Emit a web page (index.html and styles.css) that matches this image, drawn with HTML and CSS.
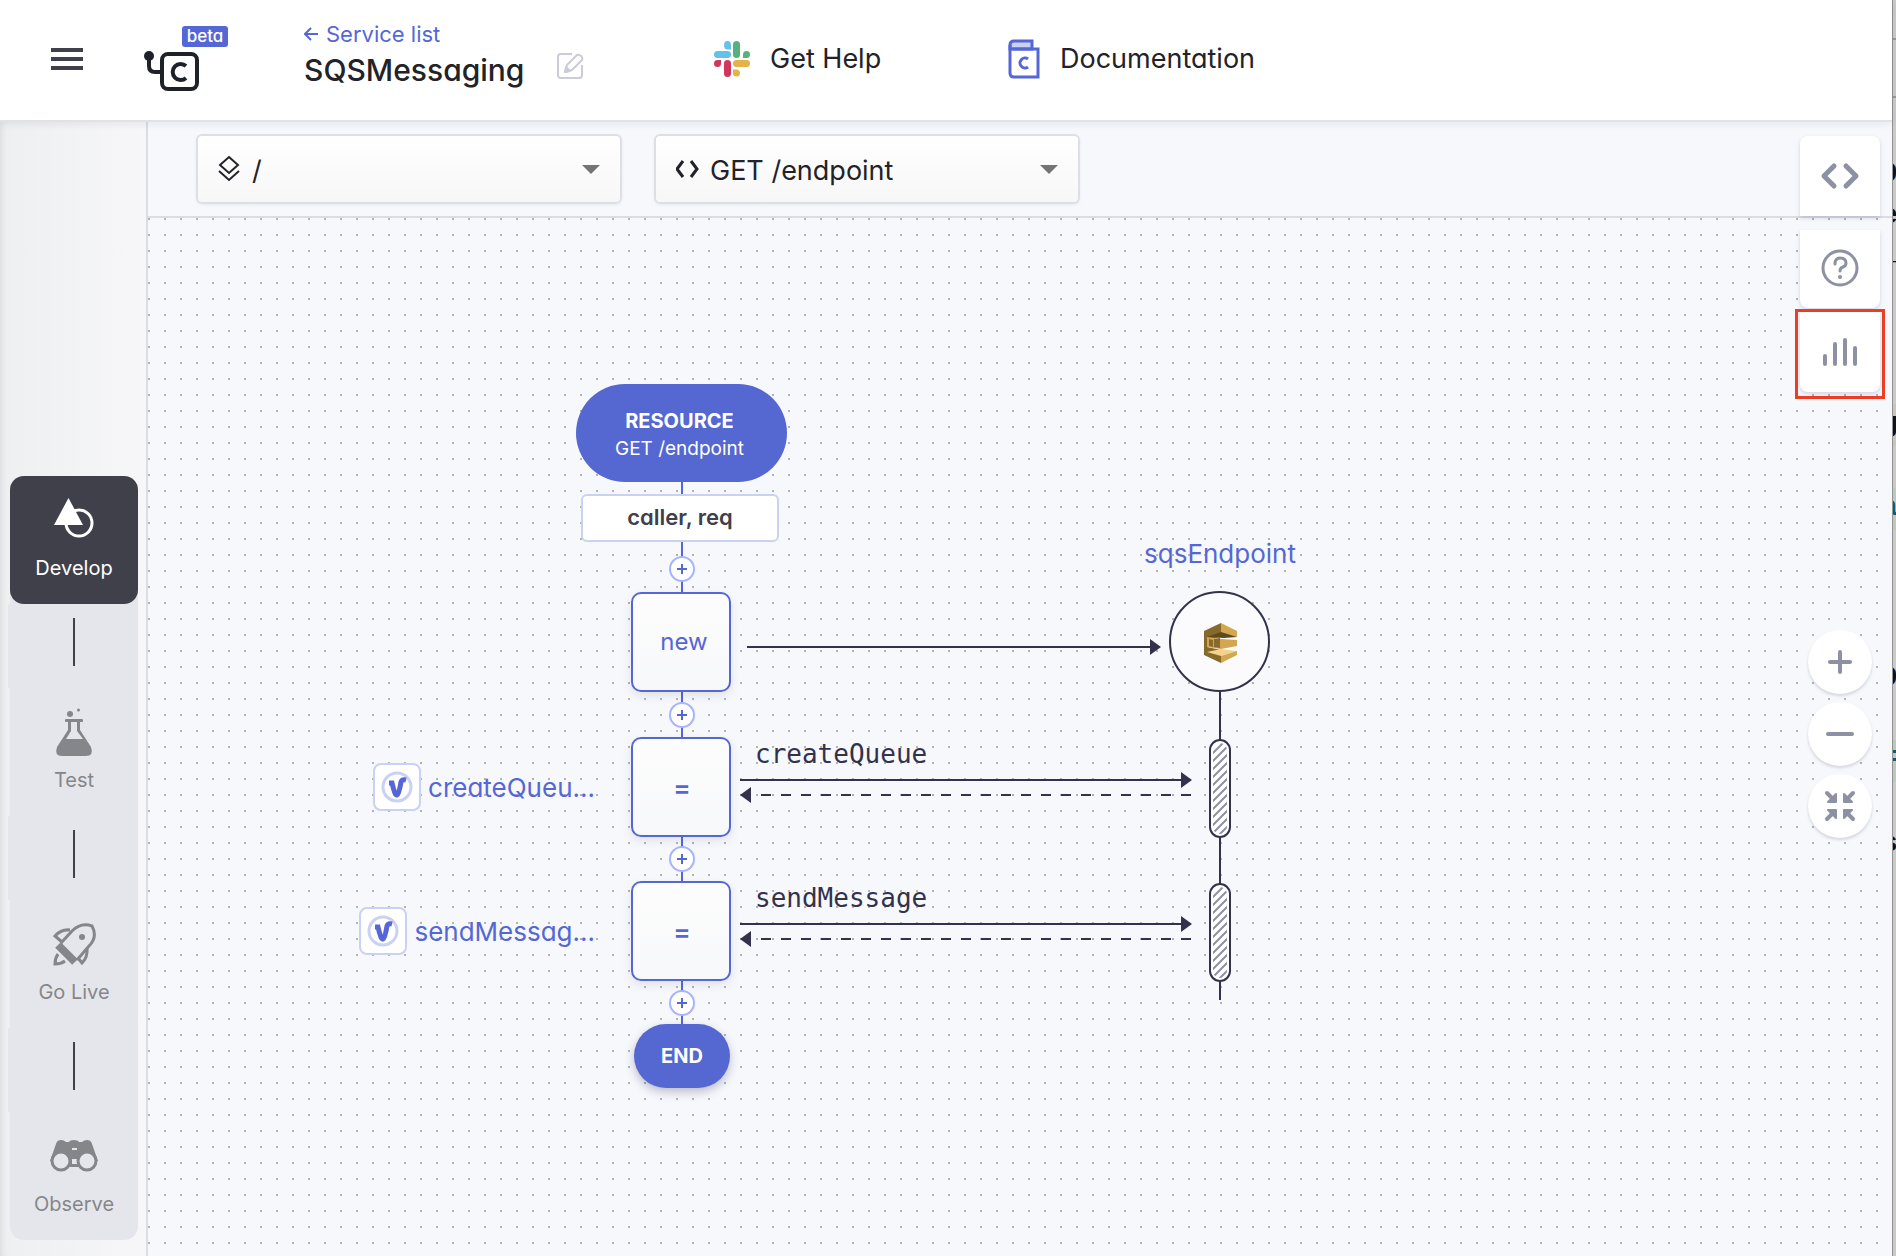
FILE: index.html
```html
<!DOCTYPE html>
<html lang="en">
<head>
<meta charset="utf-8">
<meta name="viewport" content="width=device-width, initial-scale=1">
<title>SQSMessaging</title>
<link rel="stylesheet" href="styles.css">
</head>
<body>
<div class="app">
  <header class="header">
    <button class="menu-button" aria-label="Menu"><span></span><span></span><span></span></button>
    <a class="logo" href="#" aria-label="Home">
      <svg width="90" height="66" viewBox="0 0 90 66" fill="none" stroke="#1f2129" stroke-width="4">
        <circle cx="10" cy="30" r="5" fill="#1f2129" stroke="none"/>
        <path d="M10 30v10q0 6 6 6h7"/>
        <rect x="23" y="28" width="35" height="35" rx="6"/>
        <path d="M47 40a8 8 0 1 0 0 12"/>
      </svg>
      <span class="beta">beta</span>
    </a>
    <div class="service">
      <a class="back" href="#">
        <svg width="14" height="14" viewBox="0 0 14 14" fill="none" stroke="currentColor" stroke-width="2"><path d="M14 7H2M7 1L1 7l6 6"/></svg>
        Service list</a>
      <h1>SQSMessaging</h1>
    </div>
    <button class="edit" aria-label="Rename service">
      <svg width="28" height="28" viewBox="0 0 28 28" fill="none" stroke="#cbccd8" stroke-width="2" stroke-linejoin="round">
        <path d="M16 2H5Q2 2 2 5v18q0 3 3 3h18q3 0 3-3V13"/>
        <path d="M9 20l2-7L21 3q2-1 4 1t1 4L16 18z"/><path d="M9 20l1-5 4 4z" fill="#cbccd8"/>
      </svg>
    </button>
    <a class="help-link" href="#">
      <svg width="36" height="36" viewBox="0 0 36 36">
        <g fill="#63c1ea"><path d="M17 8.500H13.500A3.500 4.250 0 1 1 17 4z"/><rect y="10" width="17" height="7" rx="3.500"/></g>
        <g fill="#56b27d"><rect x="19" width="7" height="17" rx="3.500"/><path d="M29 17v-3.500a3.500 3.500 0 1 1 3.500 3.500z"/></g>
        <g fill="#e3b248"><rect x="19" y="19" width="17" height="7" rx="3.500"/><path d="M19 28.500h3.500a3.500 3.500 0 1 1-3.500 3.500z"/></g>
        <g fill="#d2365c"><path d="M7 19v3.500A3.500 3.500 0 1 1 3.500 19z"/><rect x="10" y="19" width="7" height="17" rx="3.500"/></g>
      </svg>
      Get Help</a>
    <a class="docs-link" href="#">
      <svg width="32" height="40" viewBox="0 0 32 40" fill="none" stroke="#5567d5" stroke-width="3">
        <path d="M6 2h18v8H2V6q0-4 4-4z" fill="#cbd1f0"/>
        <path d="M2 6v28q0 4 4 4h24V10H4"/>
        <path d="M20 20a5 5 0 1 0 0 8"/>
      </svg>
      Documentation</a>
  </header>

  <div class="workspace">
    <aside class="sidebar">
      <nav class="stages">
        <a class="stage active" href="#">
          <svg width="48" height="48" viewBox="0 0 48 48"><path d="M18.500 2L33 29H4z" fill="#fff"/><circle cx="29" cy="27" r="13" fill="none" stroke="#fff" stroke-width="3"/></svg>
          Develop</a>
        <div class="link"></div>
        <a class="stage" href="#">
          <svg width="48" height="48" viewBox="0 0 48 48" fill="#85868a"><circle cx="20" cy="6" r="3"/><circle cx="28.500" cy="2" r="1.500"/><rect x="15" y="11" width="18" height="3" rx="1"/><path d="M18 13v9L7 39q-3 9 5 9h24q8 0 5-9L30 22v-9h-3v10l6 8H16l5-8V13z"/></svg>
          Test</a>
        <div class="link"></div>
        <a class="stage" href="#">
          <svg width="48" height="48" viewBox="0 0 48 48" fill="none" stroke="#85868a" stroke-width="3"><path d="M11 23L22 11Q31 2 42 6 48 17 39 26L27 40"/><path d="M8 25l17 17" stroke-width="8"/><circle cx="32" cy="17" r="3" fill="#85868a" stroke="none"/><path d="M20 10Q11 9 5 16l7 6M37 28q1 9-5 15l-4-5M8 34q-3 4-3 10 6 0 10-3"/></svg>
          Go Live</a>
        <div class="link"></div>
        <a class="stage" href="#">
          <svg width="48" height="48" viewBox="0 0 48 48" fill="#85868a"><path fill-rule="evenodd" d="M6 12q1-4 5-4 3 0 5 2h3q1-2 5-2t5 2h3q2-2 5-2 4 0 5 4l6 17H29v6H19v-6H0zM22 16v2h5v-2zM22 27v5h5v-5z"/><circle cx="11" cy="29" r="9" fill="#e5e6eb" stroke="#85868a" stroke-width="3"/><circle cx="37" cy="29" r="9" fill="#e5e6eb" stroke="#85868a" stroke-width="3"/></svg>
          Observe</a>
      </nav>
    </aside>

    <main class="main">
      <div class="toolbar">
        <div class="picker">
          <svg width="24" height="28" viewBox="0 0 24 28" fill="none" stroke="#222228" stroke-width="2"><path d="M11 2l9 8-9 8-9-8zM1 16l10 9 10-9"/></svg>
          <select aria-label="Path"><option>/</option></select>
          <i class="caret"></i>
        </div>
        <div class="picker">
          <svg width="24" height="28" viewBox="0 0 24 28" fill="none" stroke="#222228" stroke-width="3"><path d="M7 6l-6 8 6 8M15 6l6 8-6 8"/></svg>
          <select aria-label="Resource"><option>GET /endpoint</option></select>
          <i class="caret"></i>
        </div>
      </div>

      <section class="canvas" aria-label="Diagram">
        <svg class="edges" width="1200" height="860" viewBox="0 0 1200 860" fill="none" stroke="#32324d" stroke-width="2">
          <defs>
            <pattern id="hatch" width="8" height="8" patternUnits="userSpaceOnUse"><path d="M-2 2l4-4M0 8l8-8M6 10l4-4" stroke="#8d91a3" stroke-width="2"/></pattern>
          </defs>
          <path d="M534 264v542" stroke="#5567d5"/>
          <path d="M599 429h404M592 562h442M592 706h442"/>
          <path d="M593 577h450M593 721h450" stroke-dasharray="10 10"/>
          <g fill="#32324d" stroke="none">
            <path d="M1002 421v16l11-8zM1033 554v16l11-8zM1033 698v16l11-8zM603 569v16l-11-8zM603 713v16l-11-8z"/>
          </g>
          <path d="M1072 472v310"/>
          <g fill="#fff"><rect x="1062" y="522" width="20" height="97" rx="10"/><rect x="1062" y="666" width="20" height="97" rx="10"/></g>
          <g fill="url(#hatch)" stroke="none"><rect x="1065" y="525" width="14" height="91" rx="7"/><rect x="1065" y="669" width="14" height="91" rx="7"/></g>
        </svg>

        <div class="node resource"><strong>RESOURCE</strong><span>GET /endpoint</span></div>
        <div class="node params">caller, req</div>
        <button class="add add-1" aria-label="Add"></button>
        <div class="node step step-new">new</div>
        <button class="add add-2" aria-label="Add"></button>
        <div class="node step assign step-create">=</div>
        <button class="add add-3" aria-label="Add"></button>
        <div class="node step assign step-send">=</div>
        <button class="add add-4" aria-label="Add"></button>
        <div class="node end">END</div>

        <div class="variable var-create">
          <span class="badge"><svg width="33" height="33" viewBox="0 0 33 33" fill="none"><circle cx="16" cy="16" r="14" stroke="#cbd1f0" stroke-width="3"/><path d="M8 12h3q3 13 5 12t4-13q1-3 5-2" stroke="#5567d5" stroke-width="5"/></svg></span>createQueu...
        </div>
        <div class="variable var-send">
          <span class="badge"><svg width="33" height="33" viewBox="0 0 33 33" fill="none"><circle cx="16" cy="16" r="14" stroke="#cbd1f0" stroke-width="3"/><path d="M8 12h3q3 13 5 12t4-13q1-3 5-2" stroke="#5567d5" stroke-width="5"/></svg></span>sendMessag...
        </div>

        <div class="method method-create">createQueue</div>
        <div class="method method-send">sendMessage</div>

        <div class="endpoint-name">sqsEndpoint</div>
        <div class="node endpoint">
          <svg width="34" height="40" viewBox="0 0 34 40">
            <path d="M17 0L0 8v24l17 8V27l-14-3V16l14-2z" fill="#876929"/>
            <path d="M17 0l16 8v6l-16-4z" fill="#d3a650"/>
            <path d="M17 9l16 5-13 1-17-1z" fill="#5f4a1e"/>
            <path d="M3 14l14 2 16 1v6l-16 3-14-2z" fill="#d3a650"/>
            <path d="M5 16l4 1v7l-4-1zM10 16l6-1v10l-6-1z" fill="#876929"/>
            <path d="M3 29l14-3 16 2-16 5z" fill="#f4d28e"/>
            <path d="M17 33l16-5v4l-16 8z" fill="#d3a650"/>
          </svg>
        </div>
      </section>

      <div class="side-tools">
        <button class="tool tool-code" aria-label="Code">
          <svg width="40" height="40" viewBox="0 0 40 40" fill="none" stroke="#8d91a3" stroke-width="5" stroke-linecap="round" stroke-linejoin="round"><path d="M14 10L4 20l10 10M26 10l10 10-10 10"/></svg>
        </button>
        <button class="tool tool-help" aria-label="Help">
          <svg width="40" height="40" viewBox="0 0 40 40" fill="none" stroke="#8d91a3" stroke-width="3" stroke-linecap="round"><circle cx="20" cy="19" r="17"/><path d="M15 15q0-6 5-6 6 0 6 5 0 3-3 4-3 1-3 4"/><circle cx="20" cy="28" r="2" fill="#8d91a3" stroke="none"/></svg>
        </button>
        <div class="highlight">
          <button class="tool tool-stats" aria-label="Statistics">
            <svg width="40" height="40" viewBox="0 0 40 40" fill="none" stroke="#8d91a3" stroke-width="4" stroke-linecap="round"><path d="M5 24v8M15 12v20M25 8v24M35 16v16"/></svg>
          </button>
        </div>
      </div>

      <div class="zoom-tools">
        <button aria-label="Zoom in"><svg width="32" height="32" viewBox="0 0 32 32" fill="none" stroke="#8d91a3" stroke-width="4" stroke-linecap="round"><path d="M6 16h20M16 6v20"/></svg></button>
        <button aria-label="Zoom out"><svg width="32" height="32" viewBox="0 0 32 32" fill="none" stroke="#8d91a3" stroke-width="4" stroke-linecap="round"><path d="M4 16h24"/></svg></button>
        <button aria-label="Fit to screen"><svg width="32" height="32" viewBox="0 0 32 32" fill="#8d91a3" stroke="#8d91a3" stroke-width="4" stroke-linecap="round"><path d="M3 3l6 6M29 3l-6 6M3 29l6-6M29 29l-6-6"/><path stroke-width="2" stroke-linejoin="round" d="M12 4v8H4zM20 4v8h8zM12 28v-8H4zM20 28v-8h8z"/></svg></button>
      </div>
    </main>
  </div>
</div>
<div class="backdrop" aria-hidden="true">
  <i class="rule r1"></i><i class="rule r2"></i>
  <i class="band b1"></i><i class="band b2"></i><i class="band b3"></i>
  <span class="t1">0</span><span class="t2">e</span><span class="t3">_</span><span class="t4">g</span><span class="t5">a</span><span class="t6">0</span><span class="t7">=</span><span class="t8">s</span>
</div>
</body>
</html>
```
FILE: styles.css
```css
* { box-sizing: border-box; }
body {
  margin: 0;
  min-height: 100vh;
  display: flex;
  font-family: Inter, "Liberation Sans", sans-serif;
  font-feature-settings: "cv11";
  color: #222228;
  background: #f7f8fc;
}
a { color: inherit; text-decoration: none; }
button { border: 0; padding: 0; background: none; font: inherit; color: inherit; cursor: pointer; }
svg { display: block; flex: none; }

.app { flex: 1; min-width: 0; display: flex; flex-direction: column; }

/* Header */
.header {
  display: flex;
  align-items: center;
  height: 122px;
  padding: 0 0 2px 51px;
  background: #fff;
  border-bottom: 2px solid #e1e1e6;
  box-shadow: 0 2px 8px rgba(30, 30, 60, .08);
  position: relative;
  z-index: 2;
}
.menu-button { width: 32px; display: grid; gap: 5px; margin-right: 56px; }
.menu-button span { height: 4px; background: #40404b; }
.logo { position: relative; width: 90px; margin-right: 75px; }
.beta {
  position: absolute;
  left: 43px;
  top: 0;
  height: 21px;
  width: 46px;
  border-radius: 3px;
  background: #5567d5;
  color: #fff;
  font-size: 17px;
  font-weight: 500;
  line-height: 20px;
  text-align: center;
}
.service { width: 252px; }
.back { display: flex; align-items: center; gap: 8px; font-size: 22px; line-height: 28px; color: #5567d5; }
h1 { margin: 2px 0 8px; font-size: 30px; line-height: 40px; font-weight: 500; }
.edit { margin: 14px 130px 0 0; }
.help-link, .docs-link { display: flex; align-items: center; gap: 20px; font-size: 27px; line-height: 32px; white-space: nowrap; }
.help-link { width: 294px; }

.workspace { flex: 1; display: flex; }

/* Sidebar */
.sidebar {
  width: 148px;
  display: flex;
  flex-direction: column;
  justify-content: flex-end;
  padding: 0 8px 16px 10px;
  border-right: 2px solid #dcdde3;
  background: linear-gradient(90deg, #eeeff1, #f7f7f9);
  box-shadow: inset 6px 0 6px -4px rgba(0, 0, 0, .08);
}
.stages { background: #e5e6eb; border-radius: 14px; }
.stage {
  height: 128px;
  padding-top: 20px;
  display: flex;
  flex-direction: column;
  align-items: center;
  gap: 12px;
  font-size: 20px;
  line-height: 24px;
  color: #85868a;
}
.stage.active { background: #40404b; color: #fff; border-radius: 14px; }
.link { height: 84px; margin-left: -2px; padding: 14px 0 22px 65px; background: #e5e6eb; }
.link::before { content: ""; display: block; width: 2px; height: 48px; background: #40404b; }

/* Main area */
.main { flex: 1; min-width: 0; position: relative; display: flex; flex-direction: column; }
.toolbar { display: flex; gap: 32px; padding: 12px 48px; border-bottom: 2px solid #dcdde3; background: #f6f8fc; }
.picker {
  width: 426px;
  height: 70px;
  display: flex;
  align-items: center;
  gap: 10px;
  padding: 0 20px;
  border: 2px solid #dedfe5;
  border-radius: 6px;
  background: linear-gradient(#fff, #f7f7f8);
  box-shadow: 0 1px 3px rgba(0, 0, 0, .06);
}
.picker select {
  flex: 1;
  min-width: 0;
  appearance: none;
  border: 0;
  padding: 4px 0 0;
  background: none;
  font: inherit;
  font-feature-settings: inherit;
  font-size: 27px;
  line-height: 36px;
  color: inherit;
}
.caret { border: 9px solid transparent; border-top-color: #757575; border-bottom: 0; }

/* Diagram */
.canvas {
  flex: 1;
  position: relative;
  background: radial-gradient(circle at 1px 1px, #b2b3b8 1px, transparent 1px) 0 0 / 16px 16px #f7f8fc;
}
.edges { position: absolute; left: 0; top: 0; }
.node { position: absolute; display: flex; align-items: center; justify-content: center; }
.resource {
  left: 428px; top: 166px; width: 211px; height: 98px;
  flex-direction: column;
  padding: 4px 4px 0 0;
  border-radius: 49px;
  background: #5567d0;
  color: #fff;
  font-size: 19px;
  line-height: 28px;
}
.resource strong { font-size: 20px; }
.params {
  left: 433px; top: 276px; width: 198px; height: 48px;
  padding-bottom: 2px;
  border: 2px solid #cbd1f0;
  border-radius: 6px;
  background: #fff;
  color: #40404b;
  font-size: 22px;
  font-weight: 600;
}
.step {
  left: 483px; width: 100px; height: 100px;
  border: 2px solid #5567d5;
  border-radius: 10px;
  background: linear-gradient(#fdfdfd, #f7f8fa);
  box-shadow: 0 4px 10px rgba(50, 50, 90, .1);
  color: #5567d5;
  font-size: 24px;
}
.step-new { top: 374px; padding: 0 0 2px 6px; }
.assign { font-size: 26px; font-weight: 600; padding-left: 2px; }
.step-create { top: 519px; }
.step-send { top: 663px; }
.add {
  position: absolute;
  left: 521px; width: 26px; height: 26px;
  border: 2px solid #a6b3ff;
  border-radius: 50%;
  background:
    linear-gradient(#5567d5, #5567d5) center / 10px 2px no-repeat,
    linear-gradient(#5567d5, #5567d5) center / 2px 10px no-repeat,
    #fff;
}
.add-1 { top: 338px; }
.add-2 { top: 484px; }
.add-3 { top: 628px; }
.add-4 { top: 772px; }
.end {
  left: 486px; top: 806px; width: 96px; height: 64px;
  border-radius: 32px;
  background: #5567d0;
  box-shadow: 0 4px 10px rgba(50, 50, 90, .3);
  color: #fff;
  font-size: 20px;
  font-weight: 700;
}
.variable {
  position: absolute;
  left: 146px; width: 301px; height: 48px;
  display: flex;
  align-items: center;
  justify-content: flex-end;
  gap: 7px;
  color: #5567d5;
  font-size: 26px;
}
.var-create { top: 545px; }
.var-send { top: 689px; }
.badge {
  width: 48px; height: 48px;
  display: grid;
  place-items: center;
  border: 2px solid #cbd1f0;
  border-radius: 8px;
  background: #fff;
}
.method {
  position: absolute;
  left: 607px;
  font-family: "DejaVu Sans Mono", monospace;
  font-size: 26px;
  line-height: 32px;
  color: #32324d;
}
.method-create { top: 520px; }
.method-send { top: 664px; }
.endpoint-name {
  position: absolute;
  left: 972px; top: 320px; width: 200px;
  text-align: center;
  font-size: 26px;
  line-height: 32px;
  color: #5567d5;
}
.endpoint {
  left: 1021px; top: 373px; width: 101px; height: 101px;
  padding: 2px 0 0 2px;
  border: 2px solid #32324d;
  border-radius: 50%;
  background: #fbfbfd;
}

/* Floating tools */
.side-tools { position: absolute; right: 12px; top: 14px; width: 80px; }
.tool {
  width: 80px; height: 80px;
  display: grid;
  place-items: center;
  background: #fff;
  box-shadow: 0 2px 4px rgba(50, 50, 90, .18);
}
.tool-code { border-radius: 8px 8px 0 0; margin-bottom: 14px; }
.tool-help { height: 78px; border-radius: 0 0 8px 8px; margin-bottom: 1px; }
.highlight { width: 90px; height: 90px; margin-left: -5px; padding: 0 2px; border: 3px solid #ee3d24; }
.tool-stats { border-radius: 0 0 8px 8px; }
.zoom-tools { position: absolute; right: 20px; top: 508px; display: grid; gap: 8px; }
.zoom-tools button {
  width: 64px; height: 64px;
  display: grid;
  place-items: center;
  border-radius: 50%;
  background: #fff;
  box-shadow: 0 2px 3px rgba(50, 50, 90, .18);
}

/* Edge of the window behind */
.backdrop {
  position: relative;
  width: 4px;
  overflow: hidden;
  border-left: 1px solid #939393;
  background: #cacaca;
  font-family: "Liberation Mono", monospace;
  font-size: 28px;
  line-height: 32px;
  font-weight: 700;
  color: #111;
}
.backdrop span, .backdrop i { position: absolute; left: -12px; }
.backdrop .rule, .backdrop .band { left: 0; width: 4px; }
.rule { height: 2px; background: #999; }
.band { height: 42px; background: #b9ccb9; }
.r1 { top: 38px; }
.r2 { top: 96px; }
.b1 { top: 404px; }
.band.b1 { background: #c8c6b4; }
.b2 { top: 488px; }
.b3 { top: 740px; }
.t1 { top: 158px; }
.t2 { top: 200px; }
.t3 { top: 236px; }
.t4 { top: 408px; }
.t5 { top: 492px; color: #0b5d73; }
.t6 { top: 662px; }
.t7 { top: 742px; color: #0b5d73; }
.t8 { top: 828px; }
```
